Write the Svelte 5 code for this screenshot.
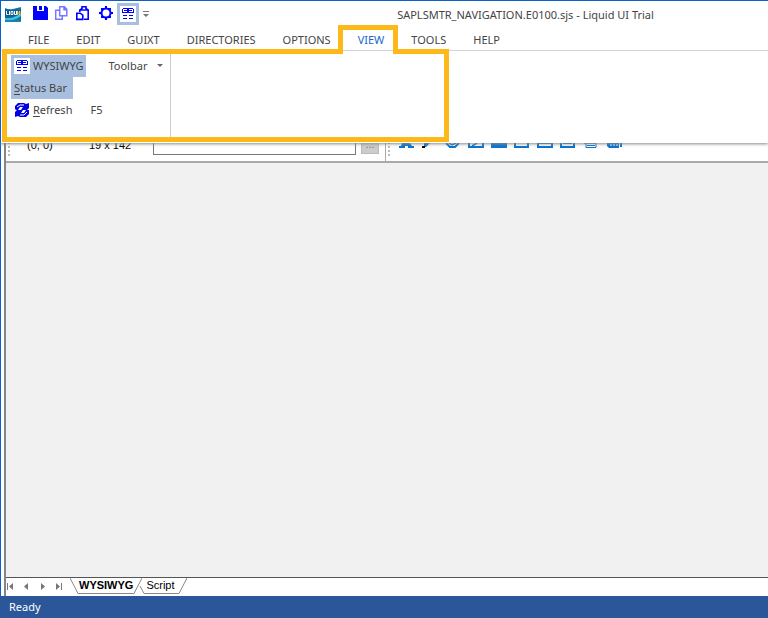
<script>
  const menus = ['FILE', 'EDIT', 'GUIXT', 'DIRECTORIES', 'OPTIONS', 'VIEW', 'TOOLS', 'HELP'];
  let active = $state('VIEW');
  let sheet = $state('WYSIWYG');
  const navs = [
    { label: 'First sheet', d: 'M1 1h1v7h-1zM7 1v7l-4-3.5z' },
    { label: 'Previous sheet', d: 'M6 1v7l-4-3.5z' },
    { label: 'Next sheet', d: 'M3 1v7l4-3.5z' },
    { label: 'Last sheet', d: 'M2 1v7l4-3.5zM7 1h1v7h-1z' }
  ];
</script>

{#snippet gridIcon()}
  <svg width="16" height="16" viewBox="0 0 16 16" shape-rendering="crispEdges">
    <rect width="16" height="16" fill="#fff" />
    <path fill="#0000ff" d="M3 2h10v1H3zM2 3h1v3H2zM13 3h1v3h-1zM7 3h2v3H7zM4 4h3v1H4zM9 4h3v1H9zM2 6h12v1H2zM3 9h4v1H3zM9 9h4v1H9zM3 12h4v1H3zM9 12h4v1H9z" />
  </svg>
{/snippet}

<div class="window">
  <header>
    <div class="titlebar">
      <svg class="logo" width="16" height="16" viewBox="0 0 16 16">
        <defs>
          <linearGradient id="sea" x1="0" y1="0" x2="0" y2="1">
            <stop offset="0" stop-color="#1683b4" />
            <stop offset="0.4" stop-color="#064b7e" />
            <stop offset="1" stop-color="#138bbd" />
          </linearGradient>
        </defs>
        <path fill="url(#sea)" d="M0 2q4 2 8 1t8-2v15H0z" />
        <path fill="#45c1db" d="M0 12q4 1 9-1q4-2 7-3v2q-5 5-16 4z" />
        <path stroke="#fff" fill="none" d="M1.500 5v3.500h2M4.500 5v4M6 5.500h2v3H6zM9.500 5v3.500h2V5" />
        <path stroke="#e8d35b" fill="none" d="M12.500 5v4M14 5.500h1v3h-1z" />
      </svg>
      <div class="quick">
        <button aria-label="Save">
          <svg width="16" height="16" viewBox="0 0 16 16"><path fill="#0000ff" d="M1 1h4v5h7V1h2l2 2v12H1zM7 1h3v4H7z" /></svg>
        </button>
        <button aria-label="Copy">
          <svg width="16" height="16" viewBox="0 0 16 16" fill="none" stroke="#7777ff" stroke-width="1.500"><path d="M5.700 1.700h4.800l2.300 2.500v6.600H5.700zM10 2v2.800h3M5 5.200H1.700v9.100h6.600V11" /></svg>
        </button>
        <button aria-label="Paste">
          <svg width="16" height="16" viewBox="0 0 16 16" fill="none" stroke="#0000ff" stroke-width="1.600"><path d="M3.800 7V5h8.400v9.200H8M4 5l2.500-2.200M12 5L9.500 2.800M6 4V1.800h4V4M.800 8.200h3.400l2.600 2v4.200h-6z" /></svg>
        </button>
        <button aria-label="Settings">
          <svg width="16" height="16" viewBox="0 0 16 16"><circle cx="8" cy="8" r="4.500" fill="none" stroke="#0000ff" stroke-width="2" /><path fill="#0000ff" d="M7 1h2v3H7zM7 12h2v3H7zM1 7h3v2H1zM12 7h3v2h-3zM3 3h3v2H3zM10 3h3v2h-3zM3 11h3v2H3zM10 11h3v2h-3z" /></svg>
        </button>
        <button class="on" aria-label="WYSIWYG view">{@render gridIcon()}</button>
      </div>
      <button class="more" aria-label="Customize toolbar">
        <svg width="6" height="8" viewBox="0 0 6 8"><path fill="#777" d="M0 1h6v1H0zM0 4h6L3 7z" /></svg>
      </button>
      <h1>SAPLSMTR_NAVIGATION.E0100.sjs - Liquid UI Trial</h1>
    </div>
    <nav>
      {#each menus as menu}
        <button class:active={active === menu} onclick={() => (active = menu)}>{menu}</button>
      {/each}
    </nav>
    <section class="ribbon">
      <div class="group">
        <div class="line">
          <button class="command on">{@render gridIcon()}WYSIWYG</button>
          <button class="drop">Toolbar<svg width="6" height="4" viewBox="0 0 6 4"><path fill="#666" d="M0 0h6L3 3z" /></svg></button>
        </div>
        <div class="line"><button class="command on"><span><u>S</u>tatus Bar</span></button></div>
        <div class="line">
          <button class="command">
            <svg width="16" height="16" viewBox="0 0 16 16">
              <path fill="#0000e6" d="M1 7V4l3-3h6l2 1 3-1v5l-2 2H7l2-3H6L4 8H2zM15 8v4l-3 3H6l-2-1-3 1v-5l2-2h6l-2 3h3l2-3z" />
              <path fill="none" stroke="#fff" d="M3 5l3-2h4M13 10l-3 3H6" />
            </svg>
            <span><u>R</u>efresh</span>
          </button>
          <span class="key">F5</span>
        </div>
      </div>
    </section>
    <svg class="marker" width="450" height="120" viewBox="0 0 450 120" aria-hidden="true">
      <path fill="none" stroke="#fdb819" stroke-width="5" d="M4.500 26.500H340.500V2.500H395.500V26.500H446.500V114.500H4.500z" />
    </svg>
  </header>

  <main>
    <div class="tools">
      <i class="grip"></i>
      <span class="position">(0, 0)</span>
      <span class="size">19 x 142</span>
      <input aria-label="Value" />
      <button class="browse" aria-label="Browse">...</button>
      <i class="rule"></i>
      <i class="grip"></i>
      <svg class="shapes" width="226" height="10" viewBox="0 0 226 10" fill="none" stroke="#0874d1" stroke-width="2">
        <path fill="#0874d1" stroke="none" d="M3 0h8l2 3h2v2H9V3H6v2H0V3h2zM25 0h6l-4 4h-2z" />
        <path fill="#000" stroke="none" d="M23 3h3v2h-3z" />
        <path d="M47 0l4 4h5l4-4M70 0v4h14V0M93 0v4h14V0M116 0v4h13V0M139 0v4h14V0M162 0v4h13V0" />
        <path stroke-width="1.500" d="M50 0l3 2 4-2M73 3l5-3" />
        <path fill="#0874d1" stroke="none" d="M93 0h13v3H93zM208 0h12v5h-10l-2-2zM221 0h2v4h-2z" />
        <path stroke-width="1" d="M139 .5h14M164 .5h9M187 0v4.500h10V0M188 2.500h8" />
        <path stroke="#888" stroke-width="1" d="M185 .5h12" />
        <path stroke="#fff" stroke-width="1" d="M212 1v2M215 1v2M218 1v2" />
      </svg>
    </div>
    <div class="canvas"></div>
    <div class="sheets">
      {#each navs as nav}
        <button class="step" aria-label={nav.label}>
          <svg width="9" height="9" viewBox="0 0 9 9"><path fill="#777" d={nav.d} /></svg>
        </button>
      {/each}
      <div class="tabs">
        {#each ['WYSIWYG', 'Script'] as name}
          <button class:current={sheet === name} onclick={() => (sheet = name)}>
            <svg class="slant" width="9" height="16" viewBox="0 0 9 16"><path d={name === 'WYSIWYG' ? 'M0 0L8 15.500H9' : 'M3 8L7 15.500H9'} /></svg>
            <span>{name}</span>
            <svg class="slant" width="9" height="16" viewBox="0 0 9 16"><path d="M9 0L1 15.500H0" /></svg>
          </button>
        {/each}
      </div>
    </div>
  </main>
  <footer>Ready</footer>
</div>

<style>
  :global(body) {
    margin: 0;
  }
  .window {
    box-sizing: border-box;
    min-height: 100vh;
    display: flex;
    flex-direction: column;
    border-top: 1px solid #0b62c4;
    background: #fff;
    color: #444;
    font: 11px/16px "Noto Sans", "Open Sans", sans-serif;
    overflow: hidden;
  }
  button {
    padding: 0;
    border: 0;
    background: none;
    color: inherit;
    font: inherit;
  }
  svg {
    display: block;
    flex: none;
  }
  header {
    position: relative;
    z-index: 1;
    background: #fff;
    border-left: 1px solid #0b62c4;
    box-shadow: 0 1px 3px #888;
  }
  .titlebar {
    display: flex;
    align-items: center;
    height: 26px;
    padding: 0 4px;
  }
  .quick {
    display: flex;
    align-items: center;
    margin-left: 8px;
  }
  .quick button {
    display: flex;
    align-items: center;
    justify-content: center;
    width: 22px;
    height: 22px;
  }
  .quick button:not(.on) {
    padding-bottom: 2px;
  }
  .on {
    background: #a9bfe0;
  }
  .more {
    margin-left: 4px;
  }
  h1 {
    flex: 1;
    margin: 2px 0 0;
    padding-left: 138px;
    text-align: center;
    font-size: 11px;
    font-weight: 400;
    white-space: nowrap;
  }
  nav {
    display: flex;
    gap: 27px;
    box-sizing: border-box;
    height: 24px;
    padding: 2px 0 0 27px;
    border-bottom: 1px solid #d4d4d4;
  }
  nav button.active {
    color: #1a66cc;
  }
  .ribbon {
    display: flex;
    height: 83px;
    padding: 3px 10px 6px;
  }
  .group {
    box-sizing: border-box;
    width: 160px;
    padding-top: 1px;
    border-right: 1px solid #ccc;
  }
  .line {
    display: flex;
    align-items: center;
    height: 22px;
  }
  .command {
    display: flex;
    align-items: center;
    gap: 3px;
    height: 22px;
    padding: 0 3px;
  }
  .command.on:has(span) {
    padding-right: 6px;
  }
  .command u {
    text-underline-offset: 2px;
  }
  .drop {
    display: flex;
    align-items: center;
    gap: 10px;
    margin-left: 22px;
  }
  .key {
    margin-left: 15px;
  }
  .marker {
    position: absolute;
    left: -1px;
    top: 24px;
    pointer-events: none;
  }
  main {
    flex: 1;
    display: flex;
    flex-direction: column;
    margin-left: 4px;
    border-left: 2px solid #858585;
    box-shadow: -3px 0 #fff, -4px 0 #0b62c4;
  }
  .tools {
    display: flex;
    align-items: flex-start;
    height: 27px;
    margin-top: -9px;
    border-bottom: 2px solid #a9a9a9;
    overflow: hidden;
    color: #000;
    font-family: "Liberation Sans", sans-serif;
  }
  .grip {
    width: 2px;
    height: 24px;
    margin-left: 2px;
    background: repeating-linear-gradient(#bbb 0 2px, #fff 2px 4px);
  }
  .position {
    width: 62px;
    margin: 3px 0 0 17px;
  }
  .size {
    width: 64px;
    margin-top: 3px;
  }
  input {
    box-sizing: border-box;
    width: 203px;
    height: 21px;
    padding: 0 3px;
    border: 1px solid #777;
    font: inherit;
  }
  .browse {
    box-sizing: border-box;
    width: 18px;
    height: 20px;
    margin: 0 6px 0 5px;
    border: 1px solid #bbb;
    background: #ccc;
    color: #777;
  }
  .rule {
    width: 1px;
    height: 27px;
    background: #aaa;
  }
  .shapes {
    margin: 9px 0 0 9px;
  }
  .canvas {
    flex: 1;
    background: #f1f1f1;
  }
  .sheets {
    display: flex;
    align-items: flex-start;
    height: 18px;
    border-top: 1px solid #555;
    color: #000;
    font-family: "Liberation Sans", sans-serif;
  }
  .step {
    width: 16px;
    margin-top: 4px;
  }
  .tabs {
    display: flex;
  }
  .tabs button {
    display: flex;
    height: 16px;
    line-height: 15px;
  }
  .tabs button + button {
    margin-left: -5px;
  }
  .tabs button + button span {
    padding-right: 3px;
  }
  .tabs span {
    border-bottom: 1px solid #888;
  }
  .current {
    font-weight: 700;
  }
  .slant {
    fill: none;
    stroke: #888;
  }
  footer {
    height: 22px;
    padding-left: 9px;
    background: #2b579a;
    color: #fff;
    line-height: 22px;
  }
</style>
